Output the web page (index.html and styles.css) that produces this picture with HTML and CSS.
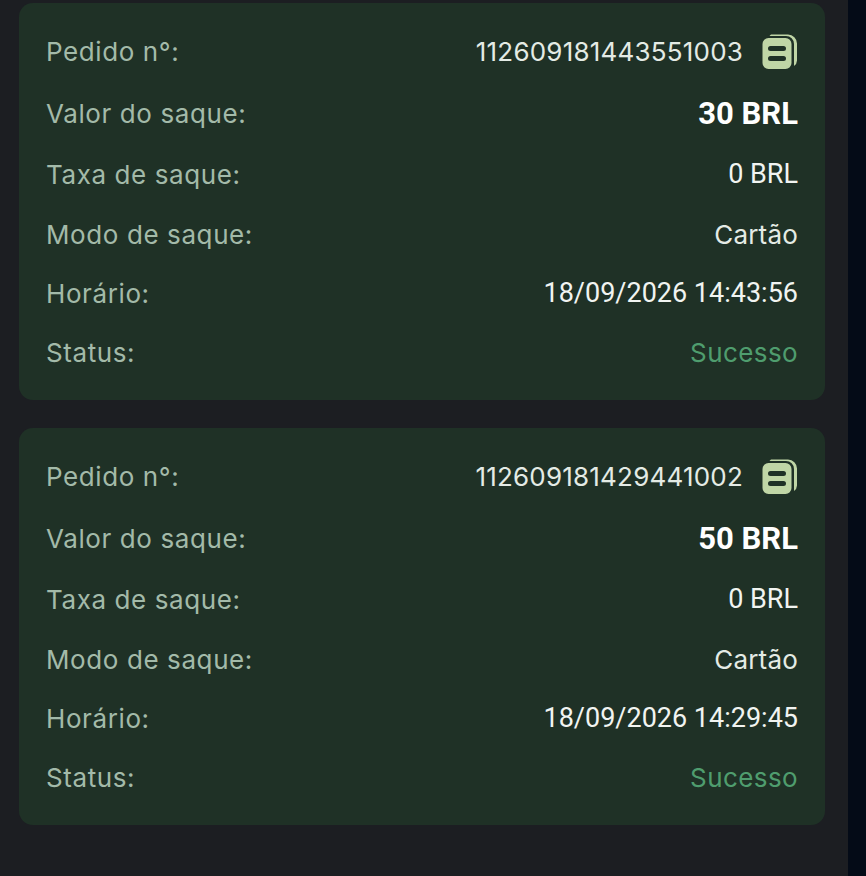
FILE: index.html
```html
<!DOCTYPE html>
<html lang="pt-BR">
<head>
  <meta charset="UTF-8" />
  <meta name="viewport" content="width=device-width, initial-scale=1.0" />
  <title>Histórico de saques</title>
  <link rel="stylesheet" href="styles.css">
</head>
<body>
  <main class="history">
    <!-- Saque 1 -->
    <div class="card">
      <div class="row row-order">
        <span class="label">Pedido n°:</span>
        <span class="order">
          <span class="value">112609181443551003</span>
          <svg class="copy" viewBox="0 0 36 36" aria-hidden="true">
            <path d="M9 1.5h17a9 9 0 0 1 9 9v17a7 7 0 0 1-3 5.5V11a8 8 0 0 0-8-8H7.5A6 6 0 0 1 9 1.5z" />
            <path fill-rule="evenodd" d="M6.500 5h17a6 6 0 0 1 6 6v19a6 6 0 0 1-6 6h-17a6 6 0 0 1-6-6V11a6 6 0 0 1 6-6zM8.500 13a2 2 0 0 0 0 5h13a2 2 0 0 0 0-5zM8.500 23a2 2 0 0 0 0 5h13a2 2 0 0 0 0-5z" />
          </svg>
        </span>
      </div>
      <div class="row row-amount"><span class="label">Valor do saque:</span><span class="amount">30 BRL</span></div>
      <div class="row row-fee"><span class="label">Taxa de saque:</span><span class="num">0 BRL</span></div>
      <div class="row row-mode"><span class="label">Modo de saque:</span><span class="value">Cartão</span></div>
      <div class="row row-time"><span class="label">Horário:</span><span class="num">18/09/2026 14:43:56</span></div>
      <div class="row row-status"><span class="label">Status:</span><span class="status">Sucesso</span></div>
    </div>

    <!-- Saque 2 -->
    <div class="card">
      <div class="row row-order">
        <span class="label">Pedido n°:</span>
        <span class="order">
          <span class="value">112609181429441002</span>
          <svg class="copy" viewBox="0 0 36 36" aria-hidden="true">
            <path d="M9 1.500h17a9 9 0 0 1 9 9v17a7 7 0 0 1-3 5.500V11a8 8 0 0 0-8-8H7.500A6 6 0 0 1 9 1.500z" />
            <path fill-rule="evenodd" d="M6.500 5h17a6 6 0 0 1 6 6v19a6 6 0 0 1-6 6h-17a6 6 0 0 1-6-6V11a6 6 0 0 1 6-6zM8.500 13a2 2 0 0 0 0 5h13a2 2 0 0 0 0-5zM8.500 23a2 2 0 0 0 0 5h13a2 2 0 0 0 0-5z" />
          </svg>
        </span>
      </div>
      <div class="row row-amount"><span class="label">Valor do saque:</span><span class="amount">50 BRL</span></div>
      <div class="row row-fee"><span class="label">Taxa de saque:</span><span class="num">0 BRL</span></div>
      <div class="row row-mode"><span class="label">Modo de saque:</span><span class="value">Cartão</span></div>
      <div class="row row-time"><span class="label">Horário:</span><span class="num">18/09/2026 14:29:45</span></div>
      <div class="row row-status"><span class="label">Status:</span><span class="status">Sucesso</span></div>
    </div>
  </main>
</body>
</html>
```

FILE: styles.css
```css
/* Reset & Base */
*, *::before, *::after { box-sizing: border-box; margin: 0; padding: 0; }
html, body { height: 100%; background: #040b17; overflow: hidden; }
body { font-family: 'Inter', 'Open Sans', Arial, sans-serif; color: #e6ede6; }

/* Page column */
.history { width: 848px; height: 876px; padding: 3px 23px 0 19px; background: #1c1e22; display: flex; flex-direction: column; gap: 28px; }

/* Withdrawal card */
.card { height: 397px; padding: 17px 27px 0; background: #1f3126; border-radius: 14px; display: flex; flex-direction: column; }
.row { display: flex; align-items: center; justify-content: space-between; height: 60px; }
.row-order { height: 62px; }
.row-amount { height: 62px; }
.row-fee { height: 60px; }
.row-mode { height: 60px; }
.row-time { height: 58px; }
.row-status { height: 60px; }

.label { font-size: 26px; color: #a3baa9; letter-spacing: 0.6px; }
.value { font-size: 26px; color: #e4ebe5; letter-spacing: 0.2px; }
.num { font-family: 'Roboto', Arial, sans-serif; font-size: 27px; color: #f1f4f1; }
.amount { font-family: 'Roboto', Arial, sans-serif; font-size: 31px; font-weight: 700; color: #fff; }
.status { font-size: 26px; color: #4f9d6e; letter-spacing: 0.4px; }

.order { display: flex; align-items: center; gap: 19px; }
.copy { width: 36px; height: 36px; fill: #c0d6a6; display: block; }
```
